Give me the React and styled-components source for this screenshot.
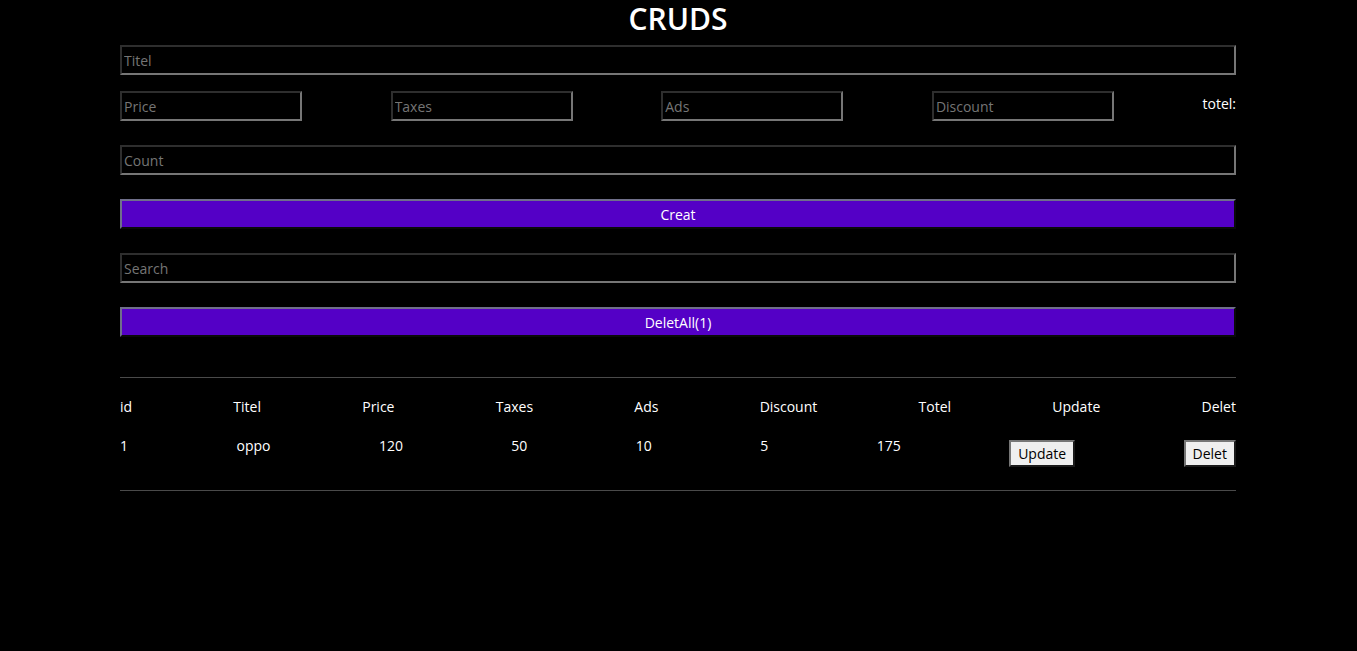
import styled, { createGlobalStyle } from "styled-components";

const GlobalStyle = createGlobalStyle`
  body {
    margin: 0;
    background: #000;
    color: #fff;
    font-family: "Open Sans", "Noto Sans", sans-serif;
  }
`;

const Page = styled.div`
  width: 1116px;
  margin-left: 120px;
`;

const Title = styled.h1`
  margin: 0 0 9px;
  padding-top: 1px;
  text-align: center;
  font-size: 30px;
  line-height: 35px;
  font-weight: 600;
`;

const Input = styled.input`
  box-sizing: border-box;
  display: block;
  width: ${(props) => props.$width || "100%"};
  height: 30px;
  margin-top: ${(props) => props.$top || "0"};
  padding: 1px 2px;
  background: #000;
  color: #fff;
  font-family: inherit;
  font-size: 14px;
  border: 2px solid;
  border-color: #2e2e2e #767676 #767676 #2e2e2e;
  outline: none;

  &::placeholder {
    color: #757575;
  }
`;

const PriceRow = styled.div`
  display: flex;
  justify-content: space-between;
  align-items: center;
  margin-top: 16px;
`;

const Total = styled.small`
  font-size: 14px;
  margin-bottom: 6px;
`;

const WideButton = styled.button`
  box-sizing: border-box;
  display: block;
  width: 100%;
  height: 30px;
  margin-top: 24px;
  background: #5400c6;
  color: #fff;
  font-family: inherit;
  font-size: 14px;
  border: 2px solid;
  border-color: #6f6f8a #0a0a0a #0a0a0a #6f6f8a;
  cursor: pointer;
`;

const Outputs = styled.div`
  margin-top: 40px;
  border-top: 1px solid #4a4a4a;
  border-bottom: 1px solid #4a4a4a;
  padding: 19px 0 23px;
  font-size: 14px;
`;

const Row = styled.div`
  display: flex;
  justify-content: space-between;
  align-items: flex-start;
  line-height: 20px;
  & + & {
    margin-top: 19px;
  }
`;

const Cell = styled.span`
  white-space: nowrap;
`;

const SmallButton = styled.button`
  margin-top: 4px;
  height: 27px;
  padding: 0 7px;
  background: #efefef;
  color: #000;
  font-family: inherit;
  font-size: 14px;
  border: 2px solid;
  border-color: #767676 #1a1a1a #1a1a1a #767676;
  cursor: pointer;
`;

const heads = ["id", "Titel", "Price", "Taxes", "Ads", "Discount", "Totel", "Update", "Delet"];
const product = { id: 1, title: "oppo", price: 120, taxes: 50, ads: 10, discount: 5, total: 175 };

export default function App() {
  return (
    <>
      <GlobalStyle />
      <Page>
        <Title>CRUDS</Title>
        <Input placeholder="Titel" />
        <PriceRow>
          <Input $width="182px" placeholder="Price" />
          <Input $width="182px" placeholder="Taxes" />
          <Input $width="182px" placeholder="Ads" />
          <Input $width="182px" placeholder="Discount" />
          <Total>totel:</Total>
        </PriceRow>
        <Input $top="24px" placeholder="Count" />
        <WideButton>Creat</WideButton>
        <Input $top="24px" placeholder="Search" />
        <WideButton>DeletAll(1)</WideButton>
        <Outputs>
          <Row>
            {heads.map((h) => (
              <Cell key={h}>{h}</Cell>
            ))}
          </Row>
          <Row>
            <Cell>{product.id}</Cell>
            <Cell>{product.title}</Cell>
            <Cell>{product.price}</Cell>
            <Cell>{product.taxes}</Cell>
            <Cell>{product.ads}</Cell>
            <Cell>{product.discount}</Cell>
            <Cell>{product.total}</Cell>
            <SmallButton>Update</SmallButton>
            <SmallButton>Delet</SmallButton>
          </Row>
        </Outputs>
      </Page>
    </>
  );
}
